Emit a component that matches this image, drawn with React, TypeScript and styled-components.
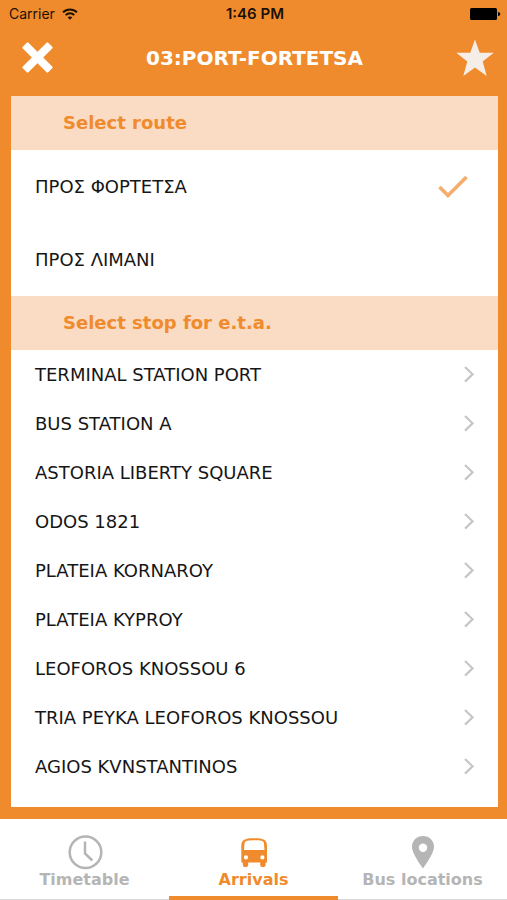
import React, { useState } from "react";
import styled, { createGlobalStyle } from "styled-components";

const orange = "#f08b2d";
const peach = "#f9dcc3";
const grey = "#b5b5b5";

const GlobalStyle = createGlobalStyle`
  * { box-sizing: border-box; }
  body { margin: 0; font-family: "DejaVu Sans", Verdana, sans-serif; }
  button { font: inherit; border: 0; padding: 0; background: none; cursor: pointer; }
  svg { display: block; flex: none; }
`;

const Screen = styled.div`
  display: flex;
  flex-direction: column;
  height: 100vh;
  background: ${orange};
`;

const StatusBar = styled.div`
  display: grid;
  grid-template-columns: 1fr auto 1fr;
  align-items: center;
  height: 27px;
  flex: none;
  padding: 0 6px 0 9px;
  font-family: Inter, sans-serif;
  font-size: 14px;
  color: #1c1006;
`;

const Carrier = styled.div`
  display: flex;
  align-items: center;
  gap: 7px;
`;

const Time = styled.time`
  font-size: 15px;
  font-weight: 600;
`;

const Battery = styled.svg`
  justify-self: end;
`;

const Header = styled.header`
  display: flex;
  align-items: center;
  justify-content: space-between;
  height: 69px;
  flex: none;
  padding: 0 13px 8px 22px;
`;

const Title = styled.h1`
  margin: 0;
  font-size: 20px;
  line-height: 24px;
  font-weight: 700;
  color: #fff;
`;

const Panel = styled.main`
  display: flex;
  flex-direction: column;
  flex: 1;
  min-height: 0;
  margin: 0 9px 12px 11px;
  background: #fff;
  overflow: hidden;
`;

const SectionTitle = styled.h2`
  margin: 0;
  padding: 0 52px;
  flex: none;
  font-size: 18px;
  line-height: 54px;
  font-weight: 700;
  color: ${orange};
  background: ${peach};
`;

const RouteLabel = styled.label`
  display: flex;
  align-items: center;
  justify-content: space-between;
  height: 73px;
  flex: none;
  padding: 0 30px 0 24px;
  font-size: 18px;
  color: #161616;
  cursor: pointer;
`;

const RouteRadio = styled.input`
  appearance: none;
  width: 0;
  height: 0;
  margin: 0;
`;

const RouteName = styled.span`
  flex: 1;
`;

const StopList = styled.ul`
  list-style: none;
  margin: 0;
  padding: 0;
  flex: 1;
  min-height: 0;
  overflow: hidden;
`;

const StopButton = styled.button`
  display: flex;
  align-items: center;
  justify-content: space-between;
  width: 100%;
  height: 49px;
  padding: 0 24px;
  font-size: 18px;
  text-align: left;
  color: #161616;
`;

const TabBar = styled.nav`
  display: grid;
  grid-template-columns: repeat(3, 1fr);
  height: 81px;
  flex: none;
  background: #fff;
`;

const Tab = styled.button<{ $active: boolean }>`
  display: flex;
  flex-direction: column;
  align-items: center;
  padding-top: 15px;
  font-size: 16px;
  line-height: 20px;
  font-weight: 700;
  color: ${(p) => (p.$active ? orange : grey)};
  border-bottom: ${(p) => (p.$active ? `4px solid ${orange}` : "1px solid #d9d9d9")};
`;

const TabIcon = styled.span`
  display: flex;
  align-items: center;
  height: 36px;
`;

const routes = ["ΠΡΟΣ ΦΟΡΤΕΤΣΑ", "ΠΡΟΣ ΛΙΜΑΝΙ"];
const stops = [
  "TERMINAL STATION PORT",
  "BUS STATION A",
  "ASTORIA LIBERTY SQUARE",
  "ODOS 1821",
  "PLATEIA KORNAROY",
  "PLATEIA KYPROY",
  "LEOFOROS KNOSSOU 6",
  "TRIA PEYKA LEOFOROS KNOSSOU",
  "AGIOS KVNSTANTINOS",
];

const WifiIcon = () => (
  <svg width="16" height="12" viewBox="0 0 16 12" fill="none" stroke="#1c1006" strokeWidth="2">
    <path d="M1 4.4C5 .4 11 .4 15 4.4" />
    <path d="M3.7 7.1c2.4-2.4 6.2-2.4 8.6 0" />
    <path d="M8 11.7 5.6 9.3c1.4-1.2 3.4-1.2 4.8 0z" fill="#1c1006" stroke="none" />
  </svg>
);

const CloseIcon = () => (
  <svg width="31" height="31" viewBox="0 0 31 31" fill="#fff">
    <rect x="-2.500" y="11.500" width="36" height="8" rx="1.200" transform="rotate(45 15.500 15.500)" />
    <rect x="-2.500" y="11.500" width="36" height="8" rx="1.200" transform="rotate(-45 15.500 15.500)" />
  </svg>
);

const StarIcon = () => (
  <svg width="38" height="38" viewBox="0 0 38 38" fill="#f5eee8">
    <path d="m19 .5 4.700 13.300h14L26.700 22.600l4 14.400L19 28.600 7.300 37l4-14.400L.3 13.800h14z" />
  </svg>
);

const CheckIcon = () => (
  <svg width="30" height="24" viewBox="0 0 30 24" fill="none" stroke="#f4ad6c" strokeWidth="3.600">
    <path d="m1.500 12 8.500 8.500L28.500 2" />
  </svg>
);

const ChevronIcon = () => (
  <svg width="10" height="18" viewBox="0 0 10 18" fill="none" stroke="#c6c6c8" strokeWidth="2.200">
    <path d="m1 1 7.500 7.300L1 15.600" />
  </svg>
);

const ClockIcon = () => (
  <svg width="36" height="36" viewBox="0 0 36 36" fill="none" stroke="currentColor" strokeWidth="2.500">
    <circle cx="18.500" cy="18.300" r="15.800" />
    <path d="M18 7.500v12l7.300 7" />
  </svg>
);

const BusIcon = () => (
  <svg width="28" height="36" viewBox="0 0 28 36" fill="currentColor">
    <path
      fillRule="evenodd"
      d="M1.300 12.500C1.300 6 4 4.300 14.300 4.300s12.700 1.700 12.700 8.200v16h-1.400V31a1.900 1.900 0 0 1-1.900 1.900h-1.600A1.900 1.900 0 0 1 20.200 31v-2.500H8.200V31a1.900 1.900 0 0 1-1.900 1.900H4.700A1.900 1.900 0 0 1 2.800 31v-2.500H1.300zM4 16h20.500l-.6-7c-.2-2-3-2.700-9.600-2.700S4.800 7 4.600 9zM6 21.300a2.100 2.100 0 1 0 0 4.200 2.100 2.100 0 0 0 0-4.200zm16.400 0a2.100 2.100 0 1 0 0 4.200 2.100 2.100 0 0 0 0-4.200z"
    />
  </svg>
);

const PinIcon = () => (
  <svg width="24" height="36" viewBox="0 0 24 36" fill="currentColor">
    <path
      fillRule="evenodd"
      d="M12 2C5.700 2 1 6.700 1 12.800 1 20 12 34.500 12 34.500S23 20 23 12.800C23 6.700 18.300 2 12 2zm0 7.500a4.200 4.200 0 1 1 0 8.400 4.200 4.200 0 0 1 0-8.400z"
    />
  </svg>
);

const tabs = [
  { name: "Timetable", Icon: ClockIcon },
  { name: "Arrivals", Icon: BusIcon },
  { name: "Bus locations", Icon: PinIcon },
];

export default function App() {
  const [route, setRoute] = useState(routes[0]);
  const [tab, setTab] = useState("Arrivals");

  return (
    <Screen>
      <GlobalStyle />
      <StatusBar>
        <Carrier>
          Carrier <WifiIcon />
        </Carrier>
        <Time>1:46 PM</Time>
        <Battery width="31" height="12" viewBox="0 0 31 12">
          <rect width="27" height="12" rx="1.500" />
          <path d="M28 4c3 0 3 4 0 4z" />
        </Battery>
      </StatusBar>
      <Header>
        <button aria-label="Close">
          <CloseIcon />
        </button>
        <Title>03:PORT-FORTETSA</Title>
        <button aria-label="Favourite">
          <StarIcon />
        </button>
      </Header>
      <Panel>
        <SectionTitle>Select route</SectionTitle>
        {routes.map((name) => (
          <RouteLabel key={name}>
            <RouteRadio type="radio" name="route" checked={route === name} onChange={() => setRoute(name)} />
            <RouteName>{name}</RouteName>
            {route === name && <CheckIcon />}
          </RouteLabel>
        ))}
        <SectionTitle>Select stop for e.t.a.</SectionTitle>
        <StopList>
          {stops.map((name) => (
            <li key={name}>
              <StopButton>
                {name}
                <ChevronIcon />
              </StopButton>
            </li>
          ))}
        </StopList>
      </Panel>
      <TabBar>
        {tabs.map(({ name, Icon }) => (
          <Tab key={name} $active={tab === name} onClick={() => setTab(name)}>
            <TabIcon>
              <Icon />
            </TabIcon>
            {name}
          </Tab>
        ))}
      </TabBar>
    </Screen>
  );
}
